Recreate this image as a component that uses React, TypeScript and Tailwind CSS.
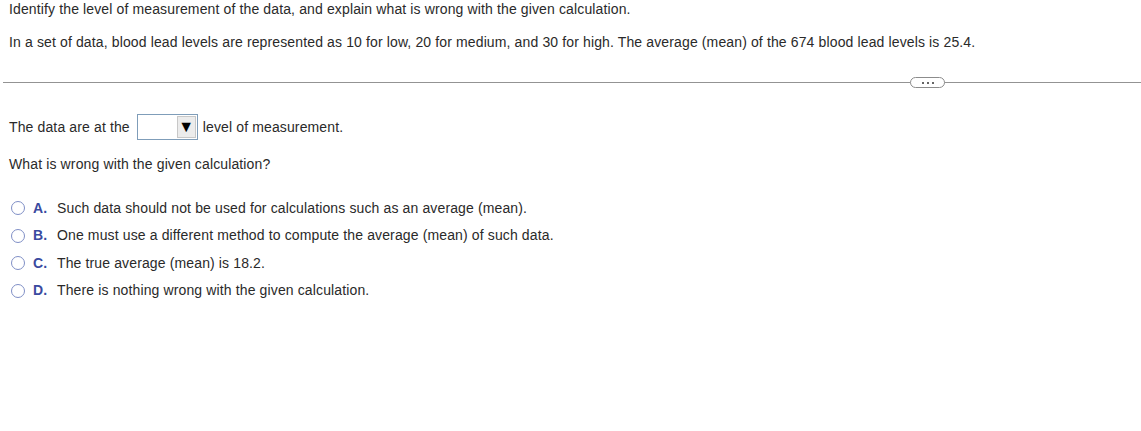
const options = [
  { letter: 'A.', text: 'Such data should not be used for calculations such as an average (mean).' },
  { letter: 'B.', text: 'One must use a different method to compute the average (mean) of such data.' },
  { letter: 'C.', text: 'The true average (mean) is 18.2.' },
  { letter: 'D.', text: 'There is nothing wrong with the given calculation.' },
];

export default function App() {
  return (
    <div className="w-[1141px] h-[431px] bg-white text-[14px] tracking-[0.13px] text-[#2a2a2a] overflow-hidden" style={{ fontFamily: '"Liberation Sans", Arial, sans-serif' }}>
      {/* Question */}
      <div className="pl-[9px] pt-[1px]">
        <p className="leading-[16px]">Identify the level of measurement of the data, and explain what is wrong with the given calculation.</p>
        <p className="leading-[16px] mt-[17px]">
          In a set of data, blood lead levels are represented as 10 for low, 20 for medium, and 30 for high. The average (mean) of the 674 blood lead levels is 25.4.
        </p>
      </div>

      {/* Divider */}
      <div className="relative mt-[32px] ml-[3px] h-[1px] bg-[#939393]">
        <div className="absolute left-[907px] top-[-5px] w-[35px] h-[11px] rounded-full border border-[#8c8c8c] bg-white flex items-center justify-center gap-[3px]">
          <span className="w-[2px] h-[2px] bg-[#666]" />
          <span className="w-[2px] h-[2px] bg-[#666]" />
          <span className="w-[2px] h-[2px] bg-[#666]" />
        </div>
      </div>

      {/* Answer part */}
      <div className="pl-[9px] mt-[31px]">
        <div className="flex items-center h-[26px]">
          <span>The data are at the</span>
          <div className="ml-[7px] w-[61px] h-[26px] border border-[#7f9db9] flex justify-end items-center pr-[1px]">
            <div className="w-[19px] h-[22px] bg-[#ececec] border border-[#c8c8c8] flex items-center justify-center text-[16px] text-black leading-none">▼</div>
          </div>
          <span className="ml-[5px]">level of measurement.</span>
        </div>
        <p className="mt-[16px] leading-[16px]">What is wrong with the given calculation?</p>

        <div className="mt-[28px] flex flex-col gap-[11.6px]">
          {options.map((o) => (
            <div key={o.letter} className="flex items-center h-[16px]">
              <span className="ml-[2px] w-[14px] h-[14px] rounded-full border border-[#7f8fc6] bg-white" />
              <span className="ml-[8px] w-[24px] font-bold text-[#3a4a9f]">{o.letter}</span>
              <span>{o.text}</span>
            </div>
          ))}
        </div>
      </div>
    </div>
  );
}
